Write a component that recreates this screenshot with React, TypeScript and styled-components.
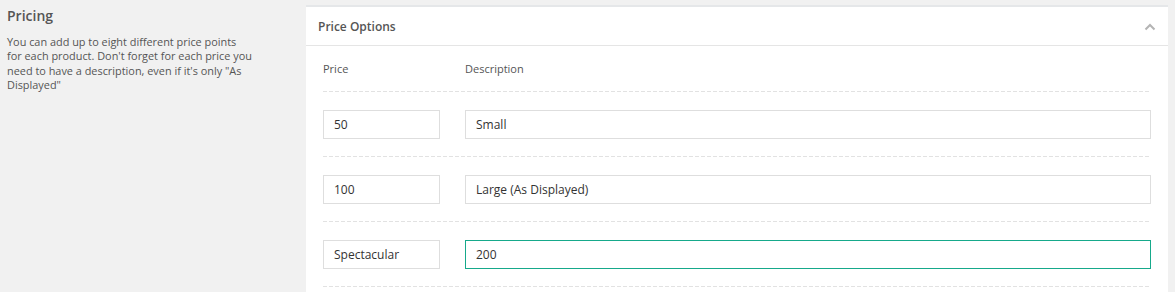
import React from "react";
import styled, { createGlobalStyle } from "styled-components";

type PriceOption = {
  price: string;
  description: string;
  focused?: boolean;
};

const options: PriceOption[] = [
  { price: "50", description: "Small" },
  { price: "100", description: "Large (As Displayed)" },
  { price: "Spectacular", description: "200", focused: true },
];

const App: React.FC = () => {
  return (
    <>
      <GlobalStyle />
      <Page>
        <Intro>
          <IntroTitle>Pricing</IntroTitle>
          <IntroText>
            You can add up to eight different price points
            <br />
            for each product. Don't forget for each price you
            <br />
            need to have a description, even if it's only "As
            <br />
            Displayed"
          </IntroText>
        </Intro>
        <Panel>
          <PanelHeader>
            <PanelTitle>Price Options</PanelTitle>
            <Chevron width="12" height="8" viewBox="0 0 12 8">
              <polyline points="1.5,6.5 6,2 10.5,6.5" />
            </Chevron>
          </PanelHeader>
          <PanelBody>
            <Row $labels>
              <PriceCell>
                <Label>Price</Label>
              </PriceCell>
              <DescCell>
                <Label>Description</Label>
              </DescCell>
            </Row>
            {options.map((o, i) => (
              <Row key={i}>
                <PriceCell>
                  <Field defaultValue={o.price} />
                </PriceCell>
                <DescCell>
                  <Field defaultValue={o.description} $focused={o.focused} />
                </DescCell>
              </Row>
            ))}
          </PanelBody>
        </Panel>
      </Page>
    </>
  );
};

const GlobalStyle = createGlobalStyle`
  html, body {
    margin: 0;
    padding: 0;
    background: #f1f1f1;
  }
  body {
    font-family: "Open Sans", "Liberation Sans", sans-serif;
    color: #555;
  }
`;

const Page = styled.div`
  display: flex;
  align-items: stretch;
  width: 1175px;
  height: 292px;
  overflow: hidden;
  background: #f1f1f1;
`;

const Intro = styled.div`
  width: 306px;
  padding-left: 7px;
  box-sizing: border-box;
  flex-shrink: 0;
`;

const IntroTitle = styled.h2`
  margin: 7px 0 0;
  font-size: 14px;
  line-height: 18px;
  font-weight: 600;
  color: #555;
`;

const IntroText = styled.p`
  margin: 10px 0 0;
  font-size: 10.9px;
  line-height: 14.3px;
  white-space: nowrap;
  color: #555;
`;

const Panel = styled.section`
  flex: 1;
  margin: 5px 7px 0 0;
  background: #fff;
  border-top: 2px solid #e5e7e9;
`;

const PanelHeader = styled.div`
  display: flex;
  align-items: center;
  justify-content: space-between;
  height: 38px;
  padding: 0 12px;
  border-bottom: 1px solid #e5e5e5;
`;

const PanelTitle = styled.h3`
  margin: 0;
  font-size: 12px;
  font-weight: 600;
  color: #555;
`;

const Chevron = styled.svg`
  fill: none;
  stroke: #b4b4b4;
  stroke-width: 2;
  margin-top: 2px;
`;

const PanelBody = styled.div`
  padding: 0 17px;
`;

const Row = styled.div<{ $labels?: boolean }>`
  display: flex;
  gap: 25px;
  padding: ${({ $labels }) => ($labels ? "14px 0 15px" : "18px 0 18px")};
  background-image: repeating-linear-gradient(
    to right,
    #e2e2e2 0,
    #e2e2e2 4px,
    transparent 4px,
    transparent 6px
  );
  background-size: 100% 1px;
  background-repeat: no-repeat;
  background-position: left bottom;
`;

const PriceCell = styled.div`
  width: 117px;
  flex-shrink: 0;
`;

const DescCell = styled.div`
  flex: 1;
`;

const Label = styled.span`
  display: block;
  font-size: 11px;
  line-height: 17px;
  color: #555;
`;

const Field = styled.input<{ $focused?: boolean }>`
  display: block;
  width: 100%;
  height: 29px;
  box-sizing: border-box;
  padding: 0 10px;
  border: 1px solid ${({ $focused }) => ($focused ? "#16a98b" : "#dedede")};
  border-radius: 0;
  outline: none;
  background: #fff;
  font-family: "Open Sans", "Liberation Sans", sans-serif;
  font-size: 12px;
  color: #333;
`;

export default App;
